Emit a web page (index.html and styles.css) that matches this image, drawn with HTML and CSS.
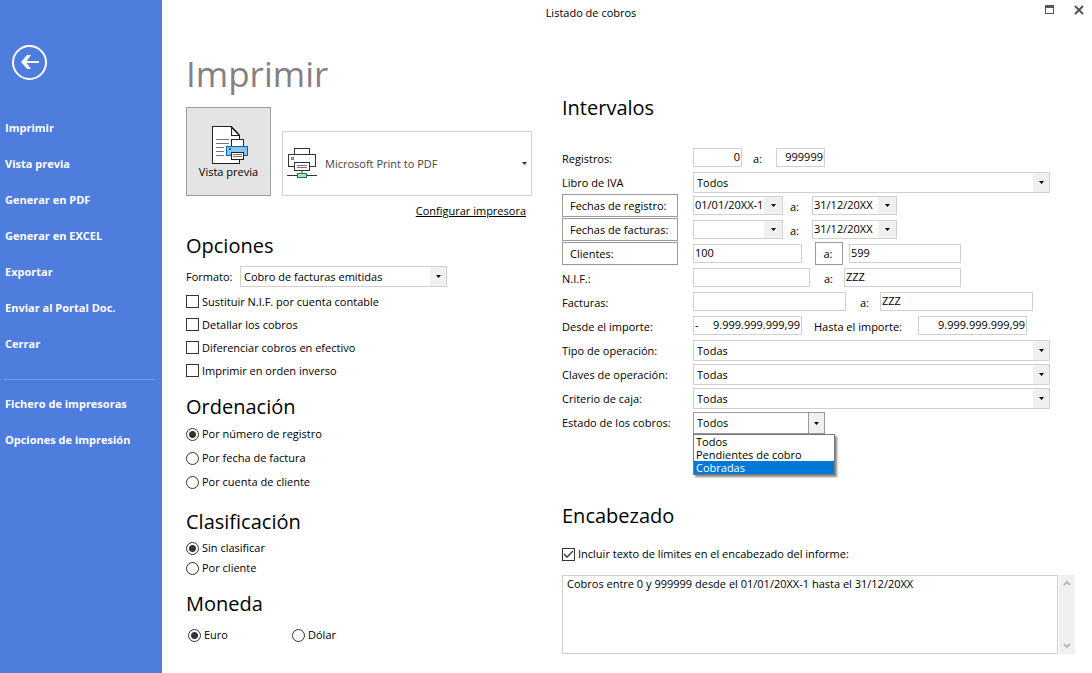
FILE: index.html
```html
<!DOCTYPE html>
<html lang="es">
<head>
<meta charset="utf-8">
<meta name="viewport" content="width=device-width, initial-scale=1">
<title>Listado de cobros</title>
<link rel="stylesheet" href="styles.css">
</head>
<body>
<div class="window">
  <aside class="sidebar">
    <button class="back" type="button" aria-label="Volver">
      <svg width="35" height="35" viewBox="0 0 35 35" fill="none" stroke="#fff">
        <circle cx="17.500" cy="17.500" r="16.500" stroke-width="2"/>
        <path d="M27 17H11" stroke-width="2"/>
        <path d="M9 17L15 10H19L14 17L19 24H15Z" fill="#fff" stroke="none"/>
      </svg>
    </button>
    <nav class="menu">
      <a href="#imprimir">Imprimir</a>
      <a href="#vista">Vista previa</a>
      <a href="#pdf">Generar en PDF</a>
      <a href="#excel">Generar en EXCEL</a>
      <a href="#exportar">Exportar</a>
      <a href="#portal">Enviar al Portal Doc.</a>
      <a href="#cerrar">Cerrar</a>
      <hr class="divider">
      <a href="#fichero">Fichero de impresoras</a>
      <a href="#opciones">Opciones de impresión</a>
    </nav>
  </aside>

  <main class="main">
    <header class="titlebar">
      <span class="caption">Listado de cobros</span>
      <div class="controls">
        <button type="button" aria-label="Maximizar">
          <svg width="9" height="9" viewBox="0 0 9 9" shape-rendering="crispEdges"><path d="M0 0H9V9H0ZM1 3V8H8V3Z" fill="#555" fill-rule="evenodd"/></svg>
        </button>
        <button type="button" aria-label="Cerrar ventana">
          <svg width="10" height="10" viewBox="0 0 10 10"><path d="M1 1L9 9M9 1L1 9" stroke="#555" stroke-width="2"/></svg>
        </button>
      </div>
    </header>

    <div class="columns">
      <section class="left">
        <h1>Imprimir</h1>
        <div class="actions">
          <button class="preview" type="button">
            <svg width="36" height="38" viewBox="0 0 36 38" fill="none" shape-rendering="crispEdges">
              <path d="M0.500 0.500H19.500L27.500 9.500V37.500H0.500Z" fill="#fff" stroke="#222"/>
              <path d="M19.500 0.500V9.500H27.500" stroke="#222"/>
              <path d="M19 0.500L27.500 9.500" stroke="#222" stroke-width="1.500" shape-rendering="auto"/>
              <path d="M4 13.500H17M4 17.500H17M4 21.500H12M4 25.500H12M4 29.500H12" stroke="#777"/>
              <path d="M19.500 21V13.500H31.500V21" fill="#fff" stroke="#222"/>
              <path d="M14.500 20.500H35.500V29.500H14.500Z" fill="#8ac4ee" stroke="#0063b1"/>
              <path d="M17 22H19V24H17Z" fill="#0063b1"/>
              <path d="M19.500 26.500H31.500V33.500H19.500Z" fill="#fff" stroke="#222"/>
              <path d="M21 28.500H30M21 30.500H30" stroke="#777"/>
            </svg>
            <span>Vista previa</span>
          </button>
          <div class="printer">
            <svg class="printer-icon" width="30" height="30" viewBox="0 0 30 30" fill="none" shape-rendering="crispEdges">
              <path d="M7.500 6V0.500H22.500V6" fill="#fff" stroke="#333"/>
              <path d="M1.500 6.500H28.500V18.500H1.500Z" fill="#fff" stroke="#333"/>
              <path d="M4.500 9.500H6.500V11.500H4.500Z" stroke="#777"/>
              <path d="M7.500 14.500H22.500V22.500H7.500Z" fill="#fff" stroke="#333"/>
              <path d="M10 17.500H20M10 19.500H20" stroke="#777"/>
              <path d="M15 23V25" stroke="#999" stroke-width="2"/>
              <path d="M0 27.500H30" stroke="#333"/>
              <path d="M10.500 25.500H19.500V29.500H10.500Z" fill="#b5dfbd" stroke="#10893e"/>
            </svg>
            <select class="printer-select" aria-label="Impresora"><option>Microsoft Print to PDF</option></select>
          </div>
        </div>
        <a class="configure" href="#configurar">Configurar impresora</a>

        <h2 class="h-options">Opciones</h2>
        <div class="format">
          <label for="formato">Formato:</label>
          <select id="formato" class="combo"><option>Cobro de facturas emitidas</option></select>
        </div>
        <div class="checks">
          <label class="choice"><input type="checkbox">Sustituir N.I.F. por cuenta contable</label>
          <label class="choice"><input type="checkbox">Detallar los cobros</label>
          <label class="choice"><input type="checkbox">Diferenciar cobros en efectivo</label>
          <label class="choice"><input type="checkbox">Imprimir en orden inverso</label>
        </div>

        <h2 class="h-order">Ordenación</h2>
        <div class="order">
          <label class="choice"><input type="radio" name="orden" checked>Por número de registro</label>
          <label class="choice"><input type="radio" name="orden">Por fecha de factura</label>
          <label class="choice"><input type="radio" name="orden">Por cuenta de cliente</label>
        </div>

        <h2 class="h-class">Clasificación</h2>
        <div class="class">
          <label class="choice"><input type="radio" name="clase" checked>Sin clasificar</label>
          <label class="choice"><input type="radio" name="clase">Por cliente</label>
        </div>

        <h2 class="h-currency">Moneda</h2>
        <div class="currency">
          <label class="choice"><input type="radio" name="moneda" checked>Euro</label>
          <label class="choice"><input type="radio" name="moneda">Dólar</label>
        </div>
      </section>

      <section class="right">
        <h2>Intervalos</h2>
        <div class="form">
          <div class="row">
            <label class="name" for="reg1">Registros:</label>
            <input id="reg1" class="field w-short num" value="0">
            <label class="to to-reg" for="reg2">a:</label>
            <input id="reg2" class="field w-short num" value="999999">
          </div>
          <div class="row">
            <label class="name" for="iva">Libro de IVA</label>
            <select id="iva" class="combo grow"><option>Todos</option></select>
          </div>
          <div class="row">
            <div class="name"><button class="pick" type="button">Fechas de registro:</button></div>
            <div class="date w-date"><input aria-label="Fecha de registro desde" value="01/01/20XX-1"><button type="button" aria-label="Elegir fecha"></button></div>
            <label class="to to-date" for="fr2">a:</label>
            <div class="date w-date2"><input id="fr2" value="31/12/20XX"><button type="button" aria-label="Elegir fecha"></button></div>
          </div>
          <div class="row">
            <div class="name"><button class="pick" type="button">Fechas de facturas:</button></div>
            <div class="date w-date"><input aria-label="Fecha de factura desde" value=""><button type="button" aria-label="Elegir fecha"></button></div>
            <label class="to to-date" for="ff2">a:</label>
            <div class="date w-date2"><input id="ff2" value="31/12/20XX"><button type="button" aria-label="Elegir fecha"></button></div>
          </div>
          <div class="row">
            <div class="name"><button class="pick" type="button">Clientes:</button></div>
            <input class="field w-amount" aria-label="Cliente desde" value="100">
            <button class="pick-to" type="button">a:</button>
            <input class="field w-client" aria-label="Cliente hasta" value="599">
          </div>
          <div class="row">
            <label class="name" for="nif1">N.I.F.:</label>
            <input id="nif1" class="field w-nif" value="">
            <label class="to to-code" for="nif2">a:</label>
            <input id="nif2" class="field w-nif" value="ZZZ">
          </div>
          <div class="row">
            <label class="name" for="fac1">Facturas:</label>
            <input id="fac1" class="field w-invoice" value="">
            <label class="to to-code" for="fac2">a:</label>
            <input id="fac2" class="field w-invoice" value="ZZZ">
          </div>
          <div class="row">
            <label class="name" for="imp1">Desde el importe:</label>
            <div class="signed field w-amount"><span>-</span><input id="imp1" class="num" value="9.999.999.999,99"></div>
            <label class="to to-amount" for="imp2">Hasta el importe:</label>
            <input id="imp2" class="field w-amount num" value="9.999.999.999,99">
          </div>
          <div class="row">
            <label class="name" for="tipo">Tipo de operación:</label>
            <select id="tipo" class="combo grow"><option>Todas</option></select>
          </div>
          <div class="row">
            <label class="name" for="claves">Claves de operación:</label>
            <select id="claves" class="combo grow"><option>Todas</option></select>
          </div>
          <div class="row">
            <label class="name" for="caja">Criterio de caja:</label>
            <select id="caja" class="combo grow"><option>Todas</option></select>
          </div>
          <div class="row">
            <label class="name" for="estado">Estado de los cobros:</label>
            <div class="open-combo">
              <select id="estado" class="combo active"><option>Todos</option></select>
              <ul class="list" role="listbox" aria-label="Estado de los cobros">
                <li role="option">Todos</li>
                <li role="option">Pendientes de cobro</li>
                <li role="option" class="selected" aria-selected="true">Cobradas</li>
              </ul>
            </div>
          </div>
        </div>

        <h2 class="h-header">Encabezado</h2>
        <label class="choice include"><input type="checkbox" checked>Incluir texto de límites en el encabezado del informe:</label>
        <div class="memo">
          <textarea aria-label="Texto del encabezado">Cobros entre 0 y 999999 desde el 01/01/20XX-1 hasta el 31/12/20XX</textarea>
          <div class="scroll">
            <button type="button" aria-label="Subir"><svg width="8" height="7" viewBox="0 0 8 7"><path d="M1 5L4 2L7 5" fill="none" stroke="#bbb" stroke-width="2"/></svg></button>
            <button type="button" aria-label="Bajar"><svg width="8" height="7" viewBox="0 0 8 7"><path d="M1 2L4 5L7 2" fill="none" stroke="#bbb" stroke-width="2"/></svg></button>
          </div>
        </div>
      </section>
    </div>
  </main>
</div>
</body>
</html>
```
FILE: styles.css
```css
* { box-sizing: border-box; }

body {
  margin: 0;
  background: #fff;
  color: #000;
  font: 11px/16px "Open Sans", "Noto Sans", sans-serif;
}

button, input, select, textarea {
  margin: 0;
  padding: 0;
  border: 0;
  border-radius: 0;
  background: none;
  color: inherit;
  font: inherit;
}

select { appearance: none; }

.window { display: flex; min-height: 100vh; }

/* Sidebar */
.sidebar {
  flex: none;
  width: 162px;
  padding-top: 45px;
  background: #4e7ddd;
  color: #fff;
}
.back { display: block; height: 35px; margin-left: 12px; }
.back svg { display: block; }
.menu { display: flex; flex-direction: column; padding-top: 30px; }
.menu a {
  padding-left: 5px;
  color: #fff;
  font-weight: 700;
  line-height: 36px;
  text-decoration: none;
}
.divider {
  width: 150px;
  height: 1px;
  margin: 17px 0 6px 4px;
  border: 0;
  background: #7299ee;
}

/* Title bar */
.main { flex: 1; min-width: 0; }
.titlebar { display: flex; height: 26px; }
.caption { flex: 1; text-align: center; line-height: 26px; }
.controls {
  display: flex;
  justify-content: flex-end;
  align-items: flex-start;
  gap: 20px;
  width: 72px;
  padding: 5px 8px 0 0;
}
.controls svg { display: block; }

.columns {
  display: grid;
  grid-template-columns: minmax(0, 346fr) minmax(0, 513fr);
  gap: 30px;
  padding: 0 17px 19px 24px;
}

h1, h2 { margin: 0; font-weight: 400; }
h1 {
  padding: 24px 0 9px;
  color: #868084;
  font-size: 35px;
  line-height: 48px;
}
h2 { font-size: 20px; line-height: 28px; }

/* Printer */
.actions { display: flex; align-items: flex-end; gap: 11px; }
.preview {
  display: flex;
  flex: none;
  flex-direction: column;
  align-items: center;
  width: 85px;
  height: 89px;
  padding-top: 18px;
  border: 1px solid #9c9c9c;
  background: #e4e4e4;
}
.preview svg { flex: none; margin-left: 2px; }
.printer { position: relative; flex: 1; min-width: 0; }
.printer-icon { position: absolute; left: 5px; top: 17px; pointer-events: none; }
.printer-select {
  display: block;
  width: 100%;
  height: 65px;
  padding-left: 42px;
  border: 1px solid #d2d2d2;
  color: #444;
  background: url("data:image/svg+xml,%3Csvg xmlns='http://www.w3.org/2000/svg' width='5' height='3'%3E%3Cpath d='M0 0H5L2.5 3Z' fill='%23333'/%3E%3C/svg%3E") no-repeat right 4px center;
}
.configure {
  display: block;
  width: fit-content;
  margin: 7px 6px 0 auto;
  color: #000;
}

/* Combo boxes */
.combo {
  height: 21px;
  padding: 0 20px 0 3px;
  border: 1px solid #d0d0d0;
  background:
    url("data:image/svg+xml,%3Csvg xmlns='http://www.w3.org/2000/svg' width='5' height='3'%3E%3Cpath d='M0 0H5L2.5 3Z'/%3E%3C/svg%3E") no-repeat right 5px center,
    linear-gradient(#f0f0f0, #f0f0f0) no-repeat right / 16px 100%;
}
.grow { flex: 1; min-width: 0; }
.combo.active {
  display: block;
  width: 100%;
  height: 22px;
  border-color: #999;
  background:
    url("data:image/svg+xml,%3Csvg xmlns='http://www.w3.org/2000/svg' width='5' height='3'%3E%3Cpath d='M0 0H5L2.5 3Z'/%3E%3C/svg%3E") no-repeat right 5px center,
    linear-gradient(90deg, #999 1px, #f0f0f0 1px) no-repeat right / 16px 100%;
}

/* Options */
.h-options { margin-top: 13px; }
.format { display: flex; align-items: center; margin-top: 6px; }
.format label { width: 54px; }
.format .combo { width: 207px; }
.choice { display: flex; align-items: center; gap: 3px; }
.choice input {
  flex: none;
  appearance: none;
  width: 13px;
  height: 13px;
  border: 1px solid #333;
  background: #fff;
}
.choice input[type="radio"] { border-radius: 50%; }
.choice input[type="radio"]:checked {
  background: radial-gradient(circle, #333 3px, #fff 4px);
}
.choice input[type="checkbox"]:checked {
  background: url("data:image/svg+xml,%3Csvg xmlns='http://www.w3.org/2000/svg' width='11' height='11'%3E%3Cpath d='M1 5L4 8L10 2' fill='none' stroke='%23333' stroke-width='1.3'/%3E%3C/svg%3E") no-repeat center;
}
.checks { margin-top: 3px; }
.checks .choice { height: 23px; }
.h-order { margin-top: 11px; }
.order { margin-top: 1px; }
.order .choice { height: 24px; }
.h-class { margin-top: 14px; }
.class { margin-top: 2px; }
.class .choice { height: 20px; }
.h-currency { margin-top: 12px; }
.currency { display: flex; margin-top: 7px; padding-left: 2px; }
.currency .choice { width: 104px; height: 20px; }

/* Range form */
.right { padding-top: 68px; }
.form { margin: 24px 25px 0 0; }
.row { display: flex; align-items: flex-start; height: 24px; }
.name { flex: none; width: 131px; line-height: 26px; }
.row > .field, .row > .combo, .row > .date, .open-combo { margin-top: 2px; }
.pick {
  display: block;
  width: 116px;
  height: 23px;
  padding-left: 7px;
  border: 1px solid #999;
  line-height: 21px;
  text-align: left;
}
.field {
  flex: none;
  height: 19px;
  padding: 0 1px 2px;
  border: 1px solid #d0d0d0;
  line-height: 15px;
}
.num { text-align: right; }
.w-short { width: 49px; }
.w-amount { width: 109px; }
.w-client { width: 112px; }
.w-nif { width: 117px; }
.w-invoice { width: 153px; }
.w-date { width: 90px; }
.w-date2 { width: 85px; }
.to { flex: none; line-height: 26px; }
.to-reg { width: 34px; padding-left: 11px; }
.to-date { width: 29px; padding-left: 7px; }
.to-code { width: 34px; padding-left: 14px; }
.to-amount { width: 116px; padding-left: 12px; }
.pick-to {
  flex: none;
  width: 28px;
  height: 23px;
  margin: 0 6px 0 13px;
  padding-right: 2px;
  border: 1px solid #999;
}
.date { display: flex; flex: none; height: 19px; border: 1px solid #d0d0d0; }
.date input { flex: 1; min-width: 0; padding: 0 0 1px 1px; }
.date button {
  flex: none;
  width: 18px;
  background: #f0f0f0 url("data:image/svg+xml,%3Csvg xmlns='http://www.w3.org/2000/svg' width='5' height='3'%3E%3Cpath d='M0 0H5L2.5 3Z'/%3E%3C/svg%3E") no-repeat center;
}
.signed { display: flex; }
.signed input { flex: 1; min-width: 0; }

/* Open list */
.open-combo { position: relative; width: 132px; }
.list {
  position: absolute;
  top: 22px;
  left: 0;
  z-index: 1;
  width: 142px;
  margin: 0;
  padding: 0;
  border: 1px solid #777;
  background: #fff;
  box-shadow: 2px 2px 2px #888;
  line-height: 13px;
  list-style: none;
}
.list li { padding-left: 2px; }
.list .selected { background: #0078d7; color: #fff; }

/* Report header */
.h-header { margin-top: 68px; }
.include { height: 20px; margin-top: 14px; }
.memo { display: flex; gap: 1px; height: 79px; margin-top: 11px; }
.memo textarea {
  flex: 1;
  min-width: 0;
  padding: 0 4px;
  border: 1px solid #d0d0d0;
  resize: none;
}
.scroll {
  display: flex;
  flex-direction: column;
  justify-content: space-between;
  width: 16px;
  padding: 5px 4px;
  background: #f0f0f0;
}
.scroll button, .scroll svg { display: block; }
```
